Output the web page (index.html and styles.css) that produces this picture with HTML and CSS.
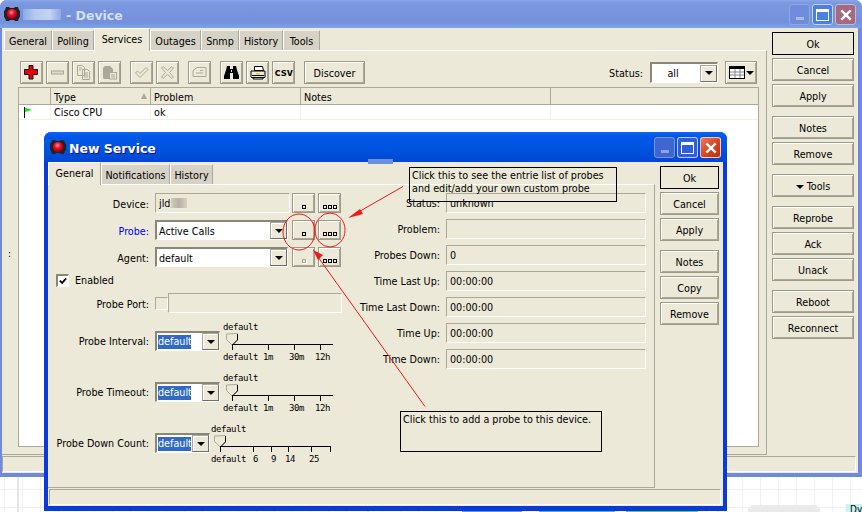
FILE: index.html
```html
<!DOCTYPE html>
<html lang="en">
<head>
<meta charset="utf-8">
<title>New Service</title>
<link rel="stylesheet" href="styles.css">
</head>
<body>
<div class="desktop">
  <div class="bit bit-a"></div><div class="bit bit-b"></div><div class="bit bit-c"></div>
  <div class="bit bit-d"></div><div class="bit bit-e">Dy</div>

  <section class="window back">
    <header class="titlebar">
      <svg class="app-icon" viewBox="0 0 16 16"><defs><radialGradient id="ball" cx="45%" cy="35%" r="65%"><stop offset="0" stop-color="#ff8a96"/><stop offset=".45" stop-color="#e8102c"/><stop offset="1" stop-color="#8a0010"/></radialGradient></defs><path d="M2 1h3l1 1h4l1-1h3l1 3 1 1v6l-1 1-1 3h-3l-1-1H6l-1 1H2l-1-3-1-1V5l1-1z" fill="#222"/><circle cx="8" cy="8" r="5.200" fill="url(#ball)"/></svg>
      <span class="blur-name"></span>
      <span class="title-text">- Device</span>
      <div class="caption-btns">
        <span class="cap cap-min"><i></i></span><span class="cap cap-max"><i></i></span>
        <span class="cap cap-close"><svg viewBox="0 0 12 12"><path d="M2 2l8 8M10 2l-8 8" stroke="#fff" stroke-width="2"/></svg></span>
      </div>
    </header>
    <div class="winbody">
      <div class="mainrow">
        <div class="tabbed">
          <nav class="tabs">
            <span class="tab w47">General</span><span class="tab w42">Polling</span><span class="tab active w55">Services</span><span class="tab w50">Outages</span><span class="tab w38">Snmp</span><span class="tab w44">History</span><span class="tab w37">Tools</span>
          </nav>
          <div class="pane pane-back">
            <span class="dots">:</span>
            <div class="toolbar">
              <button class="btn tool"><svg class="ico" viewBox="0 0 15 15"><path d="M5 .5h4v4h4.500v5H9v4.500H5V9.500H.5v-5H5z" fill="#e8000f" stroke="#111"/></svg></button>
              <button class="btn tool"><svg class="ico" viewBox="0 0 15 15"><rect x="1.500" y="6" width="12" height="3" fill="#dcd9c8" stroke="#aca899"/></svg></button>
              <button class="btn tool"><svg class="ico" viewBox="0 0 15 15"><path d="M1.500.5h5l2 2v8h-7zM6.500 4.500h5l2 2v8h-7z" fill="#ece9d8" stroke="#aca899"/><path d="M8 8h4M8 10h4M8 12h4M3 3h3M3 5h2" stroke="#aca899"/></svg></button>
              <button class="btn tool"><svg class="ico" viewBox="0 0 15 15"><path d="M1 3l2-2h5l2 2 1 1v3H7v7H2l-1-1z" fill="#aca899"/><rect x="7.500" y="7.500" width="7" height="6.500" fill="#ece9d8" stroke="#aca899"/><path d="M9 10h4M9 12h4" stroke="#aca899"/></svg></button>
              <button class="btn tool sep"><svg class="ico" viewBox="0 0 15 15"><path d="M1.500 8l2-2 2.500 2.500 6-6 2 2-8 8z" fill="#ece9d8" stroke="#aca899"/></svg></button>
              <button class="btn tool"><svg class="ico" viewBox="0 0 15 15"><path d="M3 1.500l4.500 4 4.500-4 1.500 1.500-4 4.500 4 4.500-1.500 1.500-4.500-4-4.500 4-1.500-1.500 4-4.500-4-4.500z" fill="#ece9d8" stroke="#aca899"/></svg></button>
              <button class="btn tool sep"><svg class="ico" viewBox="0 0 15 15"><path d="M1 5.500l4-3h9v9H1z" fill="#ece9d8" stroke="#aca899"/><path d="M8 5.500h3M4 8h7" stroke="#aca899"/></svg></button>
              <button class="btn tool sep"><svg class="ico" viewBox="0 0 15 15"><path d="M3 1h3v3h3V1h3l1 4 2 6v3H9V8H6v6H0v-3l2-6z" fill="#000"/><path d="M7 5h1v2H7z" fill="#ece9d8"/></svg></button>
              <button class="btn tool"><svg class="ico wide" viewBox="0 0 16 15"><path d="M4.500 1.500h8l1 4h-9z" fill="#fff" stroke="#000"/><path d="M1 6h14v6.500H1z" fill="#ece9d8" stroke="#000"/><path d="M3 12.500h10V14H3z" fill="#fff" stroke="#000"/><path d="M6 8h4v1.500H6z" fill="#e8d020"/><path d="M2 10.500h12" stroke="#000"/></svg></button>
              <button class="btn tool csv">csv</button>
              <button class="btn tool-text sep">Discover</button>
              <span class="spacer"></span>
              <span class="status-label">Status:</span>
              <span class="combo combo-status"><span class="combo-val">all</span><span class="drop"><i></i></span></span>
              <button class="btn table-btn"><svg class="table-ico" viewBox="0 0 16 13"><rect x=".5" y=".5" width="15" height="12" fill="#fff" stroke="#000"/><path d="M1 1h14v2H1z" fill="#000"/><path d="M1 6h14M1 9h14M6 3v9M11 3v9" stroke="#888"/></svg><i class="tri"></i></button>
            </div>
            <div class="grid-table">
              <div class="thead">
                <span class="th c1"></span>
                <span class="th c2">Type<i class="sort"></i></span>
                <span class="th c3">Problem</span>
                <span class="th c4">Notes</span>
                <span class="th c5"></span>
              </div>
              <div class="tr">
                <span class="td c1"><svg class="flag" viewBox="0 0 9 11"><path d="M.5 0v11" stroke="#000" stroke-width="1"/><path d="M1 .5l7 2.500-7 2z" fill="#10f010"/></svg></span>
                <span class="td c2">Cisco CPU</span>
                <span class="td c3">ok</span>
                <span class="td c4"></span>
                <span class="td c5"></span>
              </div>
            </div>
          </div>
        </div>
        <aside class="sidebar side-back">
          <button class="btn sb default">Ok</button>
          <button class="btn sb">Cancel</button>
          <button class="btn sb">Apply</button>
          <button class="btn sb gap">Notes</button>
          <button class="btn sb">Remove</button>
          <button class="btn sb gap"><i class="tri tri-l"></i>Tools</button>
          <button class="btn sb gap">Reprobe</button>
          <button class="btn sb">Ack</button>
          <button class="btn sb">Unack</button>
          <button class="btn sb gap">Reboot</button>
          <button class="btn sb">Reconnect</button>
        </aside>
      </div>
      <div class="statusbar"></div>
    </div>
  </section>

  <section class="window front">
    <header class="titlebar">
      <svg class="app-icon" viewBox="0 0 16 16"><path d="M2 1h3l1 1h4l1-1h3l1 3 1 1v6l-1 1-1 3h-3l-1-1H6l-1 1H2l-1-3-1-1V5l1-1z" fill="#222"/><circle cx="8" cy="8" r="5.200" fill="url(#ball)"/></svg>
      <span class="title-text">New Service</span>
      <span class="title-patch"></span>
      <div class="caption-btns">
        <span class="cap cap-min"><i></i></span><span class="cap cap-max"><i></i></span>
        <span class="cap cap-close"><svg viewBox="0 0 12 12"><path d="M2 2l8 8M10 2l-8 8" stroke="#fff" stroke-width="2"/></svg></span>
      </div>
    </header>
    <div class="winbody">
      <div class="mainrow">
        <div class="tabbed">
          <nav class="tabs">
            <span class="tab active w52">General</span><span class="tab w68">Notifications</span><span class="tab w43">History</span>
          </nav>
          <div class="pane pane-front">
            <div class="form">
              <div class="col-left">
                <div class="row r20"><label class="lbl">Device:</label><div class="ctl"><span class="field f-device">jld<i class="blur-val"></i></span><button class="btn mini"><i class="d"></i></button><button class="btn mini"><i class="d"></i><i class="d"></i><i class="d"></i></button></div></div>
                <div class="row r20"><label class="lbl blue">Probe:</label><div class="ctl"><span class="combo combo-wide"><span class="combo-val left">Active Calls</span><span class="drop"><i></i></span></span><button class="btn mini"><i class="d"></i></button><button class="btn mini"><i class="d"></i><i class="d"></i><i class="d"></i></button></div></div>
                <div class="row r20"><label class="lbl">Agent:</label><div class="ctl"><span class="combo combo-wide"><span class="combo-val left">default</span><span class="drop"><i></i></span></span><button class="btn mini off"><i class="d"></i></button><button class="btn mini"><i class="d"></i><i class="d"></i><i class="d"></i></button></div></div>
                <div class="row-check"><span class="check"><svg viewBox="0 0 11 11"><path d="M2 5l2.500 2.500L9 2.500" fill="none" stroke="#000" stroke-width="2"/></svg></span><span>Enabled</span></div>
                <div class="row r20 r-port"><label class="lbl">Probe Port:</label><div class="ctl c-port"><span class="check empty"></span><span class="field f-port"></span></div></div>

                <div class="row r-slider"><label class="lbl lbl-s">Probe Interval:</label>
                  <div class="ctl c-slider">
                    <span class="combo combo-sel"><span class="sel">default</span><span class="drop"><i></i></span></span>
                    <svg class="slider" viewBox="0 0 112 42"><text x="1" y="10">default</text><path d="M4.500 14v5.500l5.500 5.500 5.500-5.500V13.500z" fill="#ece9d8" stroke="#aca899"/><path d="M15.500 14v6l-5 5" fill="none" stroke="#000"/><path d="M10 24.500h101M10.500 25v5M46.500 25v5M72.500 25v5M98.500 25v5" stroke="#000"/><text x="1" y="40">default</text><text x="41" y="40">1m</text><text x="67" y="40">30m</text><text x="93" y="40">12h</text></svg>
                  </div></div>
                <div class="row r-slider"><label class="lbl lbl-s">Probe Timeout:</label>
                  <div class="ctl c-slider">
                    <span class="combo combo-sel"><span class="sel">default</span><span class="drop"><i></i></span></span>
                    <svg class="slider" viewBox="0 0 112 42"><text x="1" y="10">default</text><path d="M4.500 14v5.500l5.500 5.500 5.500-5.500V13.500z" fill="#ece9d8" stroke="#aca899"/><path d="M15.500 14v6l-5 5" fill="none" stroke="#000"/><path d="M10 24.500h101M10.500 25v5M46.500 25v5M72.500 25v5M98.500 25v5" stroke="#000"/><text x="1" y="40">default</text><text x="41" y="40">1m</text><text x="67" y="40">30m</text><text x="93" y="40">12h</text></svg>
                  </div></div>
                <div class="row r-slider"><label class="lbl lbl-s">Probe Down Count:</label>
                  <div class="ctl c-slider c-short">
                    <span class="combo combo-sel short"><span class="sel">default</span><span class="drop"><i></i></span></span>
                    <svg class="slider long" viewBox="0 0 122 42"><text x="1" y="10">default</text><path d="M4.500 14v5.500l5.500 5.500 5.500-5.500V13.500z" fill="#ece9d8" stroke="#aca899"/><path d="M15.500 14v6l-5 5" fill="none" stroke="#000"/><path d="M10 24.500h111M10.500 25v5M43.500 25v5M61.500 25v5M78.500 25v5M101.500 25v5M120.500 25v5" stroke="#000"/><text x="1" y="40">default</text><text x="43" y="40">6</text><text x="61" y="40">9</text><text x="75" y="40">14</text><text x="99" y="40">25</text></svg>
                  </div></div>
              </div>
              <div class="col-right">
                <div class="inf"><label class="lbl">Status:</label><span class="field">unknown</span></div>
                <div class="inf"><label class="lbl">Problem:</label><span class="field"></span></div>
                <div class="inf"><label class="lbl">Probes Down:</label><span class="field">0</span></div>
                <div class="inf"><label class="lbl">Time Last Up:</label><span class="field">00:00:00</span></div>
                <div class="inf"><label class="lbl">Time Last Down:</label><span class="field">00:00:00</span></div>
                <div class="inf"><label class="lbl">Time Up:</label><span class="field">00:00:00</span></div>
                <div class="inf"><label class="lbl">Time Down:</label><span class="field">00:00:00</span></div>
              </div>
            </div>
          </div>
        </div>
        <aside class="sidebar side-front">
          <button class="btn sb default">Ok</button>
          <button class="btn sb">Cancel</button>
          <button class="btn sb">Apply</button>
          <button class="btn sb gap">Notes</button>
          <button class="btn sb">Copy</button>
          <button class="btn sb">Remove</button>
        </aside>
      </div>
      <div class="statusbar"></div>
    </div>
  </section>

  <svg class="annot" viewBox="0 0 862 512">
    <g fill="none" stroke="#f01818" stroke-width="1">
      <ellipse cx="299" cy="232" rx="16" ry="18"/>
      <ellipse cx="330" cy="230" rx="15" ry="17"/>
      <path d="M403 186.500L355 214"/>
      <path d="M425 406.500L318 257"/>
    </g>
    <path d="M348 218l12-9 3 5z" fill="#f01818"/>
    <path d="M313 250l10 5-5 5z" fill="#f01818"/>
  </svg>
  <div class="note note-a">Click this to see the entrie list of probes<br>and edit/add your own custom probe</div>
  <div class="note note-b">Click this to add a probe to this device.</div>
</div>
</body>
</html>
```
FILE: styles.css
```css
* { box-sizing: border-box; }
html, body { margin: 0; padding: 0; }
body { width: 862px; height: 512px; overflow: hidden; font: 10.7px "DejaVu Sans Condensed", "DejaVu Sans", sans-serif; font-stretch: condensed; color: #000; }
.desktop {
  position: relative; width: 862px; height: 512px; overflow: hidden;
  background-color: #fff;
  background-image:
    linear-gradient(90deg, #e6e6e6 2px, transparent 2px),
    linear-gradient(#f0f0f0 1px, transparent 1px),
    linear-gradient(90deg, #f0f0f0 1px, transparent 1px);
  background-size: 350px 100%, 18px 18px, 18px 18px;
  background-position: 17px 0, 0 3px, 4px 0;
}
.bit { position: absolute; }
.bit-a { left: 462px; top: 509px; width: 60px; height: 3px; background: #5aa0f0; }
.bit-b { left: 539px; top: 509px; width: 76px; height: 3px; background: #2bc4f0; }
.bit-c { left: 626px; top: 509px; width: 72px; height: 3px; background: #48d868; }
.bit-d { left: 748px; top: 505px; width: 72px; height: 10px; border-radius: 8px; background: #eaeaea; }
.bit-e { left: 846px; top: 504px; width: 16px; height: 8px; padding-left: 4px; background: #c8f4f4; font-size: 10px; line-height: 12px; overflow: hidden; }

.window { position: absolute; display: flex; flex-direction: column; border-radius: 7px 7px 0 0; }
.back { left: 0; top: 0; width: 862px; height: 477px; padding: 0 4px 4px 2px; background: #7089dd; }
.front { left: 44px; top: 132px; width: 683px; height: 379px; padding: 0 4px 5px 4px; background: #0a3ad8; }

.titlebar { position: relative; display: flex; align-items: center; flex: none; font: 700 12.500px "DejaVu Sans", sans-serif; }
.title-text { padding-top: 2px; }
.back .titlebar { height: 28px; margin: 0 -4px 0 -2px; padding: 0 6px 0 4px; border-radius: 7px 7px 0 0; background: linear-gradient(#8aa6e8 0, #7a98de 3px, #7590dc 80%, #7aa6e8 100%); color: #d4dff5; }
.front .titlebar { height: 30px; margin: 0 -4px; padding: 0 6px 0 6px; border-radius: 7px 7px 0 0; background: linear-gradient(#0a6af0 0, #0058e8 4px, #0054e3 50%, #004ad4 90%, #0444da 100%); color: #fff; text-shadow: 1px 1px #0f1089; }
.app-icon { width: 16px; height: 16px; flex: none; }
.back .app-icon { margin-right: 3px; }
.front .app-icon { margin-right: 3px; }
.blur-name { width: 38px; height: 11px; margin-right: 5px; background: linear-gradient(90deg, #8ea8e6, #b5c8f0 30%, #c5d3f2 70%, #8ea8e6); }
.title-patch { position: absolute; left: 324px; top: 27px; width: 25px; height: 5px; background: #6c8fdd; }
.caption-btns { display: flex; gap: 2px; margin-left: auto; padding-top: 1px; }
.cap { position: relative; display: flex; align-items: center; justify-content: center; width: 21px; height: 21px; border: 1px solid rgba(255,255,255,.7); border-radius: 3px; }
.cap i { display: block; }
.cap-min i { width: 8px; height: 3px; margin-top: 8px; background: rgba(255,255,255,.4); }
.cap-max i { width: 13px; height: 12px; border: 1px solid #fff; border-top-width: 3px; }
.cap svg { width: 14px; height: 14px; }
.back .cap-min { background: #6f8ddc; border-color: #91a8e4; }
.back .cap-max { background: #4a7fe8; border-color: #c5d4f4; }
.back .cap-close { background: #a56a80; border-color: #c8b8c8; }
.front .cap-min { background: #3f66cf; border-color: #7a95dc; }
.front .cap-max { background: #2c5fdc; }
.front .cap-close { background: linear-gradient(135deg, #e87a5a, #d2401c 60%, #c03010); }

.winbody { display: flex; flex-direction: column; flex: 1; min-height: 0; background: #ece9d8; }
.mainrow { display: flex; flex: 1; gap: 5px; padding-right: 4px; min-height: 0; }
.tabbed { display: flex; flex-direction: column; flex: 1; min-width: 0; }
.tabs { display: flex; align-items: flex-end; height: 22px; flex: none; padding-left: 2px; position: relative; z-index: 1; }
.front .tabs { padding-left: 0; }
.tab { display: flex; align-items: center; justify-content: center; height: 20px; flex: none; background: #d6d3c6; border-top: 1px solid #f4f2e8; border-left: 1px solid #fff; border-right: 1px solid #aca899; padding-top: 2px; }
.tab.active { height: 23px; margin-bottom: -1px; background: #ece9d8; border-top: 1px solid #fff; padding-bottom: 2px; padding-top: 0; }
.w37 { width: 37px; } .w38 { width: 38px; } .w42 { width: 42px; } .w43 { width: 43px; } .w44 { width: 44px; } .w47 { width: 48px; } .w50 { width: 51px; } .w52 { width: 53px; } .w55 { width: 56px; } .w68 { width: 69px; }
.pane { position: relative; flex: 1; min-height: 0; border-top: 1px solid #fff; border-right: 1px solid #aca899; border-bottom: 1px solid #aca899; }
.pane-back { display: flex; flex-direction: column; padding: 10px 7px 7px 16px; }
.dots { position: absolute; left: 6px; top: 197px; font-size: 10px; }

.btn { display: flex; align-items: center; justify-content: center; padding: 0; margin: 0; font: inherit; font-stretch: condensed; color: #000; background: #ece9d8; border: 1px solid #9d9a88; box-shadow: inset 1px 1px #fff, inset -1px -1px #aca899; }
.toolbar { display: flex; align-items: flex-start; gap: 3px; height: 23px; margin: 0 2px 3px 2px; flex: none; }
.tool { width: 23px; height: 23px; flex: none; }
.sep { margin-left: 6px; }
.tool-text { width: 61px; height: 23px; flex: none; padding-top: 1px; }
.ico { width: 15px; height: 15px; }
.ico.wide { width: 16px; }
.csv { font: 700 11px "DejaVu Sans Mono", monospace; letter-spacing: -.5px; }
.spacer { flex: 1; }
.status-label { margin: 6px 4px 0 0; }
.combo { position: relative; display: flex; align-items: center; flex: none; background: #fff; border-top: 2px solid #8a8778; border-left: 2px solid #8a8778; border-right: 1px solid #fff; border-bottom: 1px solid #fff; }
.combo-status { width: 68px; height: 21px; margin: 1px 4px 0 0; }
.combo-val { flex: 1; text-align: center; padding: 1px 6px 0 0; }
.combo-val.left { text-align: left; padding-left: 2px; }
.drop { display: flex; align-items: center; justify-content: center; width: 17px; height: 17px; flex: none; background: #ece9d8; border: 1px solid #aca899; border-right-color: #716f64; border-bottom-color: #716f64; box-shadow: inset 1px 1px #fff; }
.drop i, .tri { display: block; width: 0; height: 0; border-left: 4px solid transparent; border-right: 4px solid transparent; border-top: 4px solid #000; }
.table-btn { width: 32px; height: 23px; flex: none; gap: 1px; }
.table-ico { width: 16px; height: 13px; }
.tri-l { margin-right: 3px; }

.grid-table { flex: 1; min-height: 0; background: #fff; border: 1px solid #aca899; }
.thead, .tr { display: grid; grid-template-columns: 32px 100px 150px 250px 1fr; }
.thead { height: 17px; background: #ece9d8; border-bottom: 1px solid #aca899; }
.th { position: relative; display: flex; align-items: center; padding: 2px 0 0 3px; border-right: 1px solid #aca899; }
.th.c5 { border-right: 0; }
.tr { height: 15px; border-bottom: 1px solid #f1efe2; }
.td { display: flex; align-items: center; padding: 1px 0 0 3px; border-right: 1px solid #f1efe2; }
.td.c5 { border-right: 0; }
.flag { width: 9px; height: 11px; margin-left: 2px; }
.sort { position: absolute; right: 3px; top: 5px; width: 0; height: 0; border-left: 3px solid transparent; border-right: 3px solid transparent; border-bottom: 6px solid #aca899; }

.sidebar { display: flex; flex-direction: column; gap: 3px; flex: none; padding-top: 4px; }
.side-back { width: 82px; }
.side-front { width: 59px; }
.sb { height: 23px; flex: none; padding-top: 2px; }
.sb.default { border-color: #000; box-shadow: none; }
.sb.gap { margin-top: 6px; }
.statusbar { height: 16px; margin: 1px 2px 1px 0; flex: none; border-top: 1px solid #aca899; border-left: 1px solid #aca899; border-right: 1px solid #fff; border-bottom: 1px solid #fff; }
.front .statusbar { margin-left: 1px; }

.form { display: flex; gap: 13px; padding-top: 8px; }
.col-left { width: 294px; flex: none; }
.col-right { width: 291px; flex: none; display: flex; flex-direction: column; gap: 6px; }
.row { display: grid; grid-template-columns: 101px 1fr; column-gap: 6px; }
.r20 { height: 20px; margin-bottom: 7px; align-items: center; }
.lbl { text-align: right; white-space: nowrap; padding-top: 2px; }
.inf .lbl { padding-top: 0; }
.blue { color: #0000ee; }
.ctl { display: flex; align-items: flex-start; }
.field { display: block; width: 200px; height: 20px; padding-left: 3px; line-height: 19px; background: #ece9d8; border-top: 1px solid #aca899; border-left: 1px solid #aca899; border-right: 1px solid #fff; border-bottom: 1px solid #fff; white-space: nowrap; }
.f-device { width: 135px; margin-right: 2px; }
.blur-val { display: inline-block; width: 16px; height: 10px; margin-left: 1px; vertical-align: -1px; background: linear-gradient(90deg, #cfccbf, #b5b2a5 50%, #d5d2c5); }
.mini { width: 23px; height: 20px; flex: none; margin-right: 3px; gap: 0; align-items: flex-end; padding-bottom: 3px; }
.d { display: block; width: 4px; height: 4px; border: 1px solid #000; }
.d + .d { margin-left: 1px; }
.mini.off .d { border-color: #aca899; box-shadow: 1px 1px #fff; }
.combo-wide { width: 133px; height: 20px; margin-right: 4px; }
.combo-wide .combo-val { flex: 1; }
.row-check { display: flex; align-items: center; gap: 6px; height: 13px; margin: 0 0 6px 8px; }
.check { display: flex; width: 13px; height: 13px; flex: none; background: #fff; border-top: 2px solid #8a8778; border-left: 2px solid #8a8778; border-right: 1px solid #fff; border-bottom: 1px solid #fff; }
.check svg { width: 10px; height: 10px; }
.r-port { margin-bottom: 7px; }
.c-port { align-items: center; gap: 0; }
.f-port { width: 174px; }
.check.empty { background: #ece9d8; border-width: 1px; border-color: #aca899 #fff #fff #aca899; }
.r-slider { height: 42px; margin-bottom: 9px; }
.lbl-s { margin-top: 12px; line-height: 20px; padding-top: 0; }
.c-slider { gap: 2px; }
.combo-sel { width: 65px; height: 20px; margin-top: 11px; justify-content: space-between; }
.combo-sel.short { width: 55px; }
.sel { width: 33px; height: 14px; margin-left: 1px; overflow: hidden; line-height: 14px; color: #fff; background: #316ac5; white-space: nowrap; }
.slider { width: 112px; height: 42px; flex: none; font: 9px "DejaVu Sans Mono", monospace; letter-spacing: -.4px; }
.slider.long { width: 122px; margin-left: -2px; }
.inf { display: grid; grid-template-columns: 85px 200px; column-gap: 6px; height: 20px; align-items: center; }

.annot { position: absolute; left: 0; top: 0; width: 862px; height: 512px; pointer-events: none; }
.note { position: absolute; padding: 0 2px; line-height: 13px; border: 1px solid #000; white-space: nowrap; }
.note-a { left: 409px; top: 167px; width: 208px; height: 35px; padding-top: 1px; }
.note-b { left: 400px; top: 411px; width: 202px; height: 41px; padding-top: 1px; }
```
